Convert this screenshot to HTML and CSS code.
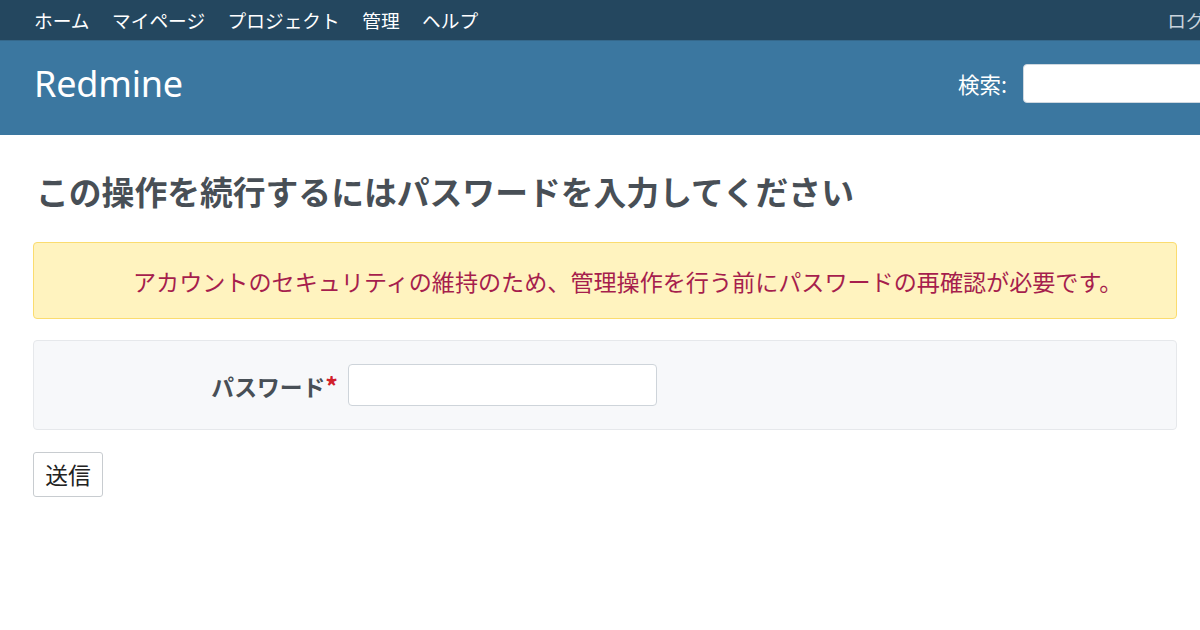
FILE: index.html
```html
<!DOCTYPE html>
<html lang="ja">
<head>
    <meta charset="UTF-8">
    <meta name="viewport" content="width=device-width, initial-scale=1.0">
    <title>Redmine</title>
    <link rel="stylesheet" href="styles.css">
</head>
<body>
    <div id="top-menu">
        <ul class="menu">
            <li><a href="#">ホーム</a></li>
            <li><a href="#">マイページ</a></li>
            <li><a href="#">プロジェクト</a></li>
            <li><a href="#">管理</a></li>
            <li><a href="#">ヘルプ</a></li>
        </ul>
        <div class="account"><a href="#">ログイン</a></div>
    </div>

    <div id="header">
        <h1>Redmine</h1>
        <div class="quick-search">
            <label for="q">検索:</label>
            <input type="text" id="q" class="search-input">
        </div>
    </div>

    <div id="content">
        <h2>この操作を続行するにはパスワードを入力してください</h2>

        <div class="flash warning">アカウントのセキュリティの維持のため、管理操作を行う前にパスワードの再確認が必要です。</div>

        <form>
            <div class="box">
                <label class="field-label" for="password">パスワード<span class="required">*</span></label>
                <input type="password" id="password" class="field-input">
            </div>
            <button type="button" class="submit">送信</button>
        </form>
    </div>
</body>
</html>
```

FILE: styles.css
```css
html, body {
    margin: 0;
    padding: 0;
    overflow: hidden;
}
body {
    font-family: "Noto Sans", "Noto Sans CJK JP", sans-serif;
    background: #ffffff;
    color: #495057;
}
a {
    color: inherit;
    text-decoration: none;
}

/* top bar */
#top-menu {
    display: flex;
    align-items: center;
    height: 40px;
    background: #24475f;
    padding: 0 0 2px 34px;
    box-sizing: border-box;
    font-family: "Noto Sans CJK JP", sans-serif;
    font-size: 18.7px;
    color: #ffffff;
}
.menu {
    display: flex;
    gap: 22.5px;
    list-style: none;
    margin: 0;
    padding: 0;
}
.account {
    margin-left: auto;
    margin-right: -42px;
    color: #c9d3dc;
    white-space: nowrap;
}

/* header */
#header {
    display: flex;
    align-items: center;
    height: 95px;
    background: #3b77a0;
    padding: 0 0 10px 34px;
    color: #ffffff;
    border-top: 1px solid #35688b;
    box-sizing: border-box;
}
#header h1 {
    margin: 0;
    font-family: "Noto Sans", sans-serif;
    font-weight: 400;
    font-size: 36px;
    letter-spacing: -0.2px;
}
.quick-search {
    display: flex;
    align-items: center;
    gap: 16px;
    margin-left: auto;
    margin-right: -60px;
    font-family: "Noto Sans CJK JP", sans-serif;
    font-size: 21.5px;
}
.search-input {
    width: 237px;
    height: 39px;
    box-sizing: border-box;
    border: 1px solid #cfd8e0;
    border-radius: 4px;
    background: #ffffff;
}

/* content */
#content {
    padding: 0 23px 0 33px;
    font-family: "Noto Sans CJK JP", sans-serif;
}
h2 {
    margin: 36px 0 32px 3px;
    font-size: 32.8px;
    line-height: 39px;
    font-weight: 700;
    color: #484f56;
}
.flash {
    height: 77px;
    box-sizing: border-box;
    display: flex;
    align-items: center;
    padding-left: 99px;
    border-radius: 4px;
    font-size: 23.1px;
}
.warning {
    background: #fff3bf;
    border: 1px solid #fbdc6f;
    color: #a61e4d;
}
.box {
    display: flex;
    align-items: center;
    gap: 10px;
    margin-top: 21px;
    padding: 23px 0;
    background: #f7f8fa;
    border: 1px solid #e6e8eb;
    border-radius: 4px;
}
.field-label {
    width: 304px;
    text-align: right;
    font-size: 22.8px;
    font-weight: 700;
    color: #484f56;
}
.required {
    color: #d1202a;
    font-size: 25px;
}
.field-input {
    width: 309px;
    height: 42px;
    box-sizing: border-box;
    border: 1px solid #ced4da;
    border-radius: 4px;
    background: #ffffff;
}
.submit {
    margin-top: 22px;
    width: 70px;
    height: 45px;
    padding: 0;
    background: #ffffff;
    border: 1px solid #c8ccd0;
    border-radius: 3px;
    font-family: "Noto Sans CJK JP", sans-serif;
    font-size: 22.8px;
    color: #222222;
}
```
